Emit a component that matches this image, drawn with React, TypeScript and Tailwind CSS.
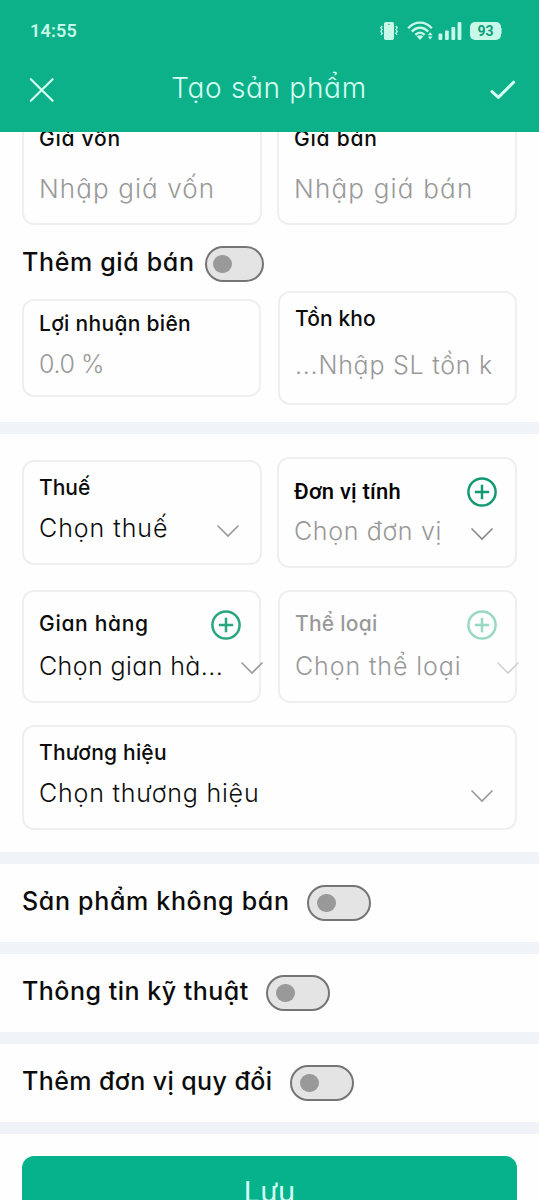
import React from 'react';
import clsx from 'clsx';

interface ToggleProps {
  className?: string;
}

const Toggle: React.FC<ToggleProps> = ({ className }) => (
  <button
    role="switch"
    aria-checked={false}
    className={clsx('flex items-center h-9 shrink-0 rounded-full border-2 border-[#757575] bg-[#e3e4e3]', className)}
  >
    <span className="w-[19px] h-[18px] rounded-full bg-[#989998]" />
  </button>
);

const Chevron: React.FC<{ className?: string }> = ({ className }) => (
  <svg width="24" height="14" viewBox="0 0 24 14" fill="none" className={clsx('shrink-0', className)}>
    <path d="M1.5 1.5 12 12 22.5 1.5" stroke="currentColor" strokeWidth="1.6" />
  </svg>
);

const AddButton: React.FC<{ className?: string }> = ({ className }) => (
  <button className={clsx('shrink-0', className)} aria-label="Thêm">
    <svg width="30" height="30" viewBox="0 0 30 30" fill="none" stroke="currentColor" strokeWidth="2.5">
      <circle cx="15" cy="15" r="13.6" />
      <path d="M15 7.8v14.4M7.8 15h14.4" />
    </svg>
  </button>
);

interface FieldProps {
  label: string;
  value: string;
  className?: string;
  labelClass?: string;
  valueClass?: string;
  addClass?: string;      // set when the field has an add button
  chevronClass?: string;  // set when the field opens a picker
}

const Field: React.FC<FieldProps> = ({ label, value, className, labelClass, valueClass, addClass, chevronClass }) => (
  <div className={clsx('flex flex-col border-2 border-[#efefef] rounded-xl pl-[15px]', className)}>
    <div className="flex items-start justify-between h-[26px]">
      <span className={clsx('leading-[26px] whitespace-nowrap', labelClass)}>{label}</span>
      {addClass && <AddButton className={addClass} />}
    </div>
    <div className="flex items-start justify-between h-[30px]">
      <span className={clsx('leading-[30px] font-light whitespace-nowrap', valueClass)}>{value}</span>
      {chevronClass && <Chevron className={chevronClass} />}
    </div>
  </div>
);

interface ToggleRowProps {
  label: string;
  labelClass: string;
  toggleClass: string;
}

const ToggleRow: React.FC<ToggleRowProps> = ({ label, labelClass, toggleClass }) => (
  <div className="flex items-start h-[78px] pl-[22px]">
    <span className={clsx('mt-[22px] text-[25px] leading-[30px] font-medium whitespace-nowrap', labelClass)}>{label}</span>
    <Toggle className={clsx('mt-[21px] w-16 pl-2', toggleClass)} />
  </div>
);

const Divider = () => <div className="h-3 bg-[#f0f4f9]" />;

const StatusBar = () => (
  <div className="flex items-center justify-between h-[60px] pl-[30px] pr-[37px] text-[#c8f8e8]">
    <span className="font-['Roboto'] font-semibold text-[18px] tracking-[0.2px] leading-6 mt-0.5">14:55</span>
    <div className="flex items-center mt-0.5">
      <svg width="20" height="20" viewBox="0 0 20 20" fill="none">
        <rect x="5" y="1" width="10" height="18" rx="1.8" fill="currentColor" />
        <circle cx="10" cy="3.4" r="0.7" fill="#0db189" />
        <path d="M3.2 5 1.8 6.8l1.4 1.8-1.4 1.8 1.4 1.8-1.2 1.8M16.8 5l1.4 1.8-1.4 1.8 1.4 1.8-1.4 1.8 1.2 1.8" stroke="currentColor" strokeWidth="1.3" />
      </svg>
      <svg width="26" height="20" viewBox="0 0 26 20" fill="none" className="ml-[8px]">
        <g stroke="currentColor" strokeWidth="2.4">
          <path d="M1.2 7.2C8-.2 18-.2 24.8 7.2" />
          <path d="M4.8 10.6c4.8-5.2 11.6-5.2 16.4 0" />
          <path d="M8.4 13.8c2.8-2.9 6.4-2.9 9.2 0" />
        </g>
        <path d="M13 19l-3.3-3.4c2-1.7 4.6-1.7 6.6 0z" fill="currentColor" />
        <path d="M23.2 11.2l2.4 3h-4.8zM23.2 18.6l2.4-3h-4.8z" fill="currentColor" />
      </svg>
      <svg width="24" height="20" viewBox="0 0 24 20" fill="currentColor" className="ml-[5px]">
        <rect x="0.5" y="12.5" width="3.8" height="6.5" rx="1" />
        <rect x="7" y="9.5" width="3.8" height="9.5" rx="1" />
        <rect x="13.4" y="6" width="3.8" height="13" rx="1" />
        <rect x="19.6" y="1" width="3.8" height="18" rx="1" />
      </svg>
      <div className="flex items-center justify-center w-[31px] h-[18px] ml-[8px] rounded-[5px] bg-[#c8f8e8] text-[#0e9d7a] font-['Roboto'] font-bold text-[14px] leading-none">
        93
      </div>
      <span className="w-px h-1.5 bg-[#7adcc0]" />
    </div>
  </div>
);

export default function App() {
  return (
    <div className="w-[539px] h-[1200px] overflow-hidden bg-[#fefefe] text-[#0c0c0c] font-['Inter','Noto_Sans',sans-serif] [font-feature-settings:'cv11']">
      <header className="h-[132px] bg-[#0db189] text-[#d5fff2]">
        <StatusBar />
        <div className="flex items-start justify-between pl-[29px] pr-[23px]">
          <svg width="26" height="26" viewBox="0 0 26 26" fill="none" stroke="currentColor" strokeWidth="2.2" strokeLinecap="round" className="mt-[17px]">
            <path d="M1.8 2.2 23.6 23.8M23.6 2.2 1.8 23.8" />
          </svg>
          <h1 className="mt-[11px] mr-[7px] text-[28px] leading-[34px] font-light tracking-[0.7px] whitespace-nowrap">Tạo sản phẩm</h1>
          <svg width="26" height="20" viewBox="0 0 26 20" fill="none" stroke="currentColor" strokeWidth="3" strokeLinecap="round" strokeLinejoin="round" className="mt-[20px]">
            <path d="M2 11.6 8.4 17.4 23.6 2.2" />
          </svg>
        </div>
      </header>

      {/* Pricing, scrolled partly under the header */}
      <section className="h-[290px] px-[22px] overflow-hidden">
        <div className="flex justify-between h-[93px] overflow-hidden">
          <Field label="Giá vốn" value="Nhập giá vốn" className="-mt-3 w-[240px] pt-[4px]" labelClass="text-[21px] font-medium tracking-[0.75px]" valueClass="mt-[22px] text-[26px] tracking-[1.1px] text-[#999]" />
          <Field label="Giá bán" value="Nhập giá bán" className="-mt-3 w-[240px] pt-[4px]" labelClass="text-[21px] font-medium tracking-[0.8px]" valueClass="mt-[22px] text-[26px] tracking-[1.2px] text-[#999]" />
        </div>
        <div className="flex items-start h-[66px]">
          <span className="mt-[22px] text-[25px] leading-[30px] font-medium tracking-[0.65px] whitespace-nowrap">Thêm giá bán</span>
          <Toggle className="mt-[21px] ml-[10px] w-[59px] pl-[6px]" />
        </div>
        <div className="flex items-start justify-between">
          <Field label="Lợi nhuận biên" value="0.0 %" className="mt-2 w-[239px] h-[98px] pt-[10px]" labelClass="text-[21px] font-medium tracking-[0.3px]" valueClass="mt-[12px] text-[25px] tracking-[-0.4px] text-[#999]" />
          <Field label="Tồn kho" value="...Nhập SL tồn k" className="w-[239px] h-[114px] pt-[13px]" labelClass="text-[21px] font-medium tracking-[0.1px]" valueClass="mt-[18px] text-[25px] tracking-[0.75px] text-[#999]" />
        </div>
      </section>

      <Divider />

      {/* Classification */}
      <section className="h-[418px] px-[22px] pt-[23px]">
        <div className="flex items-start justify-between h-[133px]">
          <Field label="Thuế" value="Chọn thuế" className="mt-[3px] w-[240px] h-[105px] pt-[13px]" labelClass="text-[21px] font-medium" valueClass="mt-[12px] text-[25px] tracking-[0.95px]" chevronClass="mt-[23px] mr-[20px] text-[#999]" />
          <Field label="Đơn vị tính" value="Chọn đơn vị" className="w-[240px] h-[111px] pt-[19px]" labelClass="mt-px text-[22px] font-['Roboto'] font-medium tracking-[0.2px] text-black" valueClass="mt-[12px] text-[25px] tracking-[0.65px] text-[#999]" addClass="-mt-[1px] mr-[18px] text-[#139a75]" chevronClass="mt-[23px] mr-[21px] text-[#888]" />
        </div>
        <div className="flex items-start justify-between h-[135px]">
          <Field label="Gian hàng" value="Chọn gian hà..." className="w-[239px] h-[113px] pt-[19px]" labelClass="text-[21px] font-medium tracking-[0.7px]" valueClass="mt-[14px] text-[25px] tracking-[0.4px]" addClass="-mt-[1px] mr-[18px] text-[#2aa67f]" chevronClass="mt-[24px] -mr-[5px] text-[#999]" />
          <Field label="Thể loại" value="Chọn thể loại" className="w-[239px] h-[113px] pt-[19px]" labelClass="text-[21px] font-medium tracking-[0.25px] text-[#999]" valueClass="mt-[14px] text-[25px] tracking-[0.9px] text-[#999]" addClass="-mt-[1px] mr-[18px] text-[#99d9c2]" chevronClass="mt-[24px] -mr-[5px] text-[#d0d0d0]" />
        </div>
        <Field label="Thương hiệu" value="Chọn thương hiệu" className="h-[105px] pt-[13px]" labelClass="text-[21px] font-medium tracking-[0.2px]" valueClass="mt-[12px] text-[25px] tracking-[0.8px]" chevronClass="mt-[23px] mr-[21px] text-[#999]" />
      </section>

      <Divider />
      <ToggleRow label="Sản phẩm không bán" labelClass="tracking-[0.68px]" toggleClass="ml-[17px]" />
      <Divider />
      <ToggleRow label="Thông tin kỹ thuật" labelClass="tracking-[0.5px]" toggleClass="ml-[17px]" />
      <Divider />
      <ToggleRow label="Thêm đơn vị quy đổi" labelClass="tracking-[0.4px]" toggleClass="ml-[18px]" />
      <Divider />

      <div className="px-[22px] pt-[22px]">
        <button className="w-full h-[70px] rounded-xl bg-[#05b28c] text-[#d5fff2] flex items-start justify-center">
          <span className="mt-[19px] text-[29px] leading-[34px] font-normal">Lưu</span>
        </button>
      </div>
    </div>
  );
}
